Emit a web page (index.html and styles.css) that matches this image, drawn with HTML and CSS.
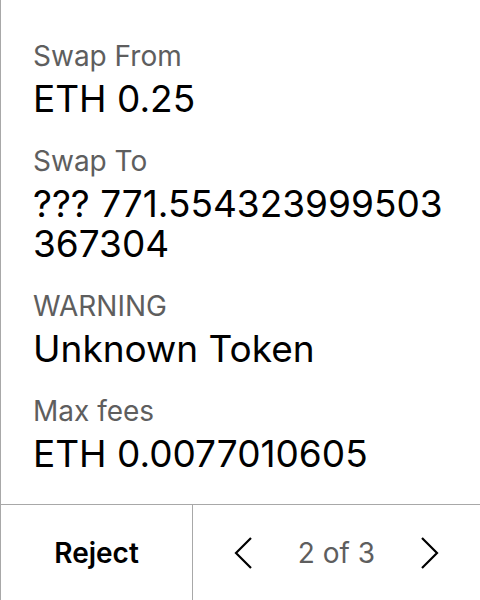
FILE: index.html
```html
<!DOCTYPE html>
<html>
<head>
<meta charset="utf-8">
<link rel="stylesheet" href="styles.css">
</head>
<body>
<div class="screen">
  <div class="content">
    <div class="field">
      <div class="label">Swap From</div>
      <div class="value">ETH 0.25</div>
    </div>
    <div class="field">
      <div class="label">Swap To</div>
      <div class="value"><div>??? 771.554323999503</div><div>367304</div></div>
    </div>
    <div class="field">
      <div class="label">WARNING</div>
      <div class="value">Unknown Token</div>
    </div>
    <div class="field">
      <div class="label">Max fees</div>
      <div class="value">ETH 0.0077010605</div>
    </div>
  </div>
  <div class="footer">
    <div class="reject">Reject</div>
    <div class="pager">
      <svg class="chev" width="18" height="32" viewBox="0 0 18 32"><path d="M17 1 L2 16 L17 31" fill="none" stroke="#000" stroke-width="2.2"/></svg>
      <span class="count">2 of 3</span>
      <svg class="chev" width="18" height="32" viewBox="0 0 18 32"><path d="M1 1 L16 16 L1 31" fill="none" stroke="#000" stroke-width="2.2"/></svg>
    </div>
  </div>
</div>
</body>
</html>
```

FILE: styles.css
```css
html, body {
  margin: 0;
  padding: 0;
  background: #fff;
}
body {
  font-family: Inter, "Noto Sans", sans-serif;
  color: #000;
}
.screen {
  width: 480px;
  height: 600px;
  box-sizing: border-box;
  border-left: 1px solid #a8a8a8;
  display: flex;
  flex-direction: column;
}
.content {
  flex: 1;
  padding: 39px 16px 0 32px;
  display: flex;
  flex-direction: column;
  gap: 25px;
}
.label {
  font-size: 28px;
  line-height: 34px;
  color: #5e5e5e;
  margin-bottom: 6px;
}
.value {
  font-size: 37px;
  line-height: 40px;
}
.footer {
  height: 95px;
  border-top: 1px solid #a8a8a8;
  display: flex;
}
.reject {
  width: 191px;
  border-right: 1px solid #a8a8a8;
  display: flex;
  align-items: center;
  justify-content: center;
  font-size: 28px;
  font-weight: 600;
}
.pager {
  flex: 1;
  display: flex;
  align-items: center;
  justify-content: space-between;
  padding: 0 41px 0 41px;
}
.count {
  font-size: 28px;
  color: #5e5e5e;
}
```
